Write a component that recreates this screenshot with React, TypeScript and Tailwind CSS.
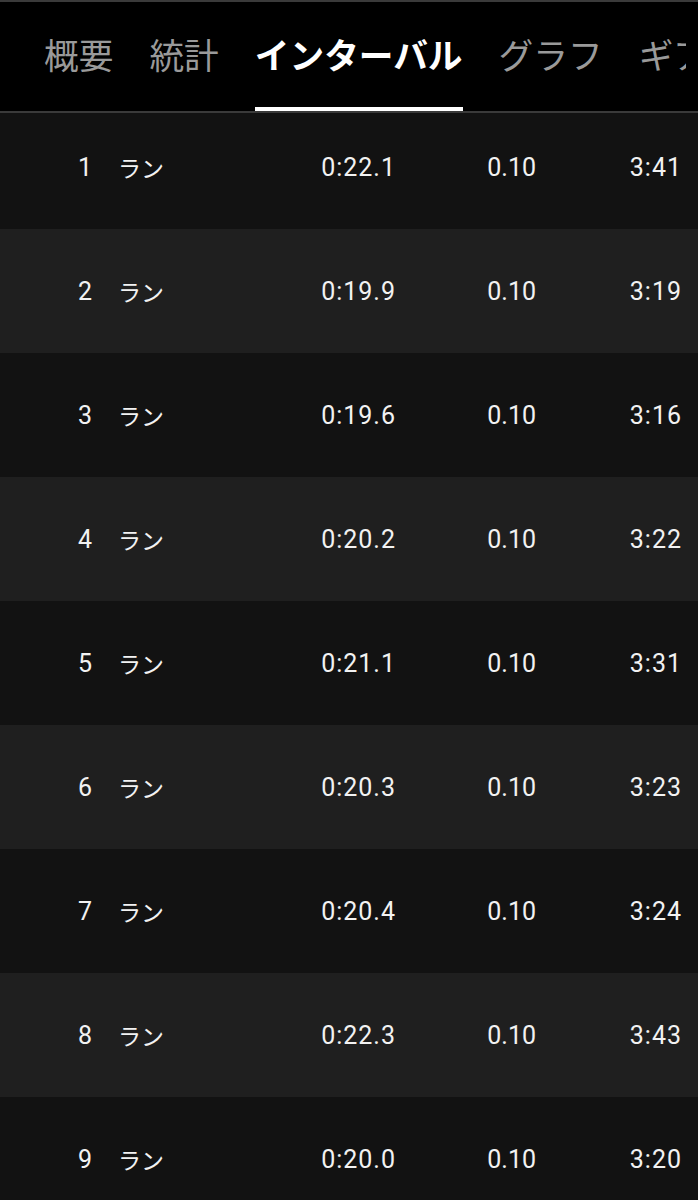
import React from "react";

const rows = [
  ["1", "0:22.1", "0.10", "3:41"],
  ["2", "0:19.9", "0.10", "3:19"],
  ["3", "0:19.6", "0.10", "3:16"],
  ["4", "0:20.2", "0.10", "3:22"],
  ["5", "0:21.1", "0.10", "3:31"],
  ["6", "0:20.3", "0.10", "3:23"],
  ["7", "0:20.4", "0.10", "3:24"],
  ["8", "0:22.3", "0.10", "3:43"],
  ["9", "0:20.0", "0.10", "3:20"],
];

const tabs = ["概要", "統計", "インターバル", "グラフ", "ギア"];

export default function App() {
  return (
    <div
      className="w-[698px] h-[1200px] overflow-hidden bg-black text-[#f2f2f2]"
      style={{ fontFamily: 'Roboto, "Noto Sans CJK JP", sans-serif' }}
    >
      <div className="border-t-2 border-b-2 border-[#3a3a3a] bg-black">
        <div className="h-[109px] w-[686px] overflow-hidden flex items-stretch gap-[36px] pl-[44px] whitespace-nowrap">
          {tabs.map((t, i) => (
            <div
              key={t}
              className={
                "relative flex items-center pb-[4px] shrink-0 text-[34.7px] " +
                (i === 2 ? "font-bold text-white" : "text-[#9a9a9a]")
              }
              style={{ fontFamily: '"Noto Sans CJK JP", sans-serif' }}
            >
              <span className="leading-none">{t}</span>
              {i === 2 && (
                <div className="absolute left-0 right-0 bottom-0 h-[4px] bg-white" />
              )}
            </div>
          ))}
        </div>
      </div>
      <div className="flex flex-col">
        {rows.map((r, i) => (
          <div
            key={r[0]}
            className={
              "flex items-center text-[25px] leading-none shrink-0 " +
              (i === 0 ? "h-[116px] pb-[8px] " : "h-[124px] ") +
              (i % 2 === 0 ? "bg-[#121212]" : "bg-[#1f1f1f]")
            }
          >
            <div className="w-[92px] text-right">{r[0]}</div>
            <div
              className="ml-[26px] w-[101px] text-[23px]"
              style={{ fontFamily: '"Noto Sans CJK JP", sans-serif' }}
            >
              ラン
            </div>
            <div className="w-[177px] text-right tracking-[1px]">{r[1]}</div>
            <div className="w-[140px] text-right">{r[2]}</div>
            <div className="w-[146px] text-right tracking-[1px]">{r[3]}</div>
          </div>
        ))}
      </div>
    </div>
  );
}
